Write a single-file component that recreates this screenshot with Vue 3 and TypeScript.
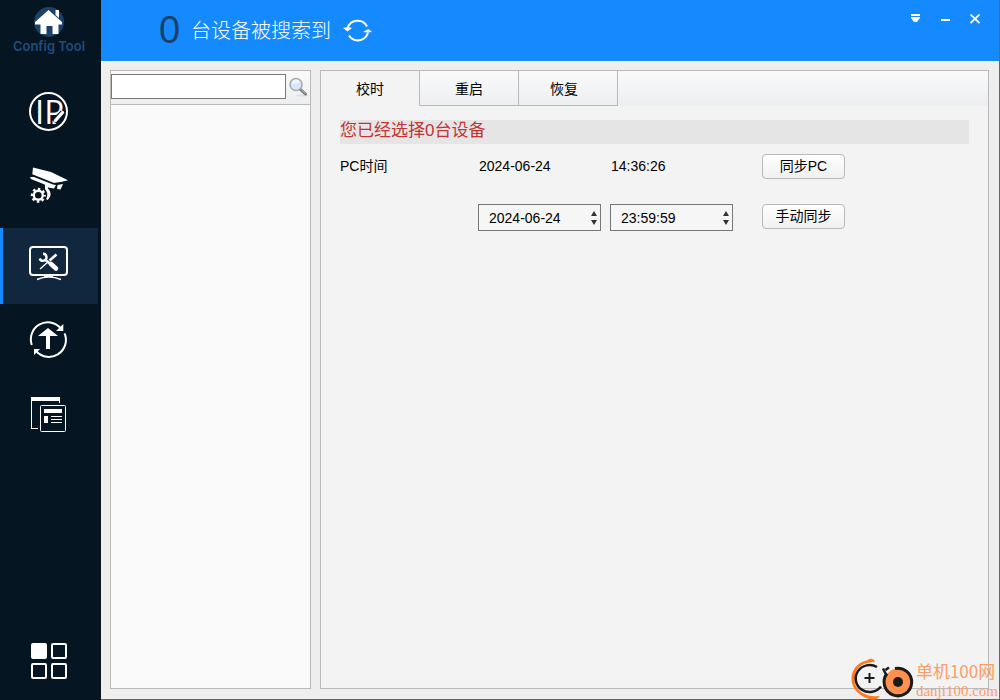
<script setup lang="ts">
import { ref } from 'vue'

const tabs: string[] = ['校时', '重启', '恢复']
const activeTab = ref(0)
const search = ref('')
const deviceCount = ref(0)
const manualDate = ref('2024-06-24')
const manualTime = ref('23:59:59')

function stepDate(days: number) {
  const d = new Date(manualDate.value + 'T00:00:00Z')
  if (isNaN(d.getTime())) return
  d.setUTCDate(d.getUTCDate() + days)
  manualDate.value = d.toISOString().slice(0, 10)
}

function stepTime(seconds: number) {
  const d = new Date('2024-01-01T' + manualTime.value + 'Z')
  if (isNaN(d.getTime())) return
  d.setUTCSeconds(d.getUTCSeconds() + seconds)
  manualTime.value = d.toISOString().slice(11, 19)
}
</script>

<template>
  <div class="window">
    <aside class="sidebar">
      <div class="brand">
        <svg width="30" height="30" viewBox="0 0 30 30" aria-hidden="true">
          <circle cx="15" cy="15" r="15" fill="#1b4168" />
          <path d="M21.500 3h3.500v8l-3.500-3z M14.500 3 28 15v2.500h-3.500V27h-6v-8h-6v8h-6v-9.500H1V15z" fill="#fff" />
        </svg>
        <span class="brand-name">Config Tool</span>
      </div>
      <nav class="nav">
        <button class="nav-item" aria-label="IP">
          <svg class="icon" viewBox="0 0 40 40">
            <circle cx="19.5" cy="20.500" r="18.500" fill="none" stroke="#fff" stroke-width="2" />
            <text class="ip" x="6" y="33">IP</text>
            <path d="M34 21.500 25 31" stroke="#061522" stroke-width="6" />
            <path d="M33.500 21.500 26.500 29.500" stroke="#fff" stroke-width="3.400" stroke-linecap="round" />
            <path d="M23.500 29.500v3.500h4z" fill="#fff" />
          </svg>
        </button>
        <button class="nav-item" aria-label="Camera">
          <svg class="icon" viewBox="0 0 40 40" fill="#fff">
            <path d="M4 .5 22 5 39 13.300 33 14.800 25 16 3.300 7.300z" />
            <path d="M1 10h4l19 7.500 3 .5-2 3.500-5-.8-5-3.500L2 12z" />
            <path d="M28.500 18l5.500-1-2.500 5.500-3.500-.6z" />
            <path d="M16 16h3v5.500c3.500 3 3.500 8.500-.5 11.500l-1.500-1c1.500-2 2-5.500 0-8.500l-1-1.500z" />
            <circle cx="9.300" cy="28.300" r="4.500" fill="none" stroke="#fff" stroke-width="2.400" />
            <circle cx="9.300" cy="28.300" r="6.300" fill="none" stroke="#fff" stroke-width="2.400" stroke-dasharray="2.500 2.448" stroke-dashoffset="1.250" />
          </svg>
        </button>
        <button class="nav-item active" aria-label="Maintenance">
          <svg class="icon" viewBox="0 0 40 40" fill="none" stroke="#fff">
            <rect x="1" y="4" width="37" height="28" rx="3" stroke-width="2" />
            <path d="M8 36.500c4-1.800 7-2.500 11.700-2.500s8 .7 12.300 2.500" stroke-width="1.600" />
            <path d="M15 33h9" stroke-width="2" />
            <path d="M11 26 20 18" stroke-width="1.300" />
            <path d="M20.500 17.500 27.500 11.500" stroke-width="2.600" />
            <path d="M22 21 27 25.500" stroke-width="4.500" stroke-linecap="round" />
            <path d="M17 17.500 22 21.500" stroke-width="2.400" />
            <path d="M14 10.800a3.500 3.500 0 1 1-3.300 4.700" stroke-width="2.400" />
          </svg>
        </button>
        <button class="nav-item" aria-label="Upgrade">
          <svg class="icon" viewBox="0 0 40 40">
            <path d="M2.800 26A17 17 0 0 1 31.500 9M35.600 14.300A17 17 0 0 1 7.500 32.500" fill="none" stroke="#fff" stroke-width="2" />
            <path d="M34.300 5v7H27zM5 30h6l-6 6zM19 9l10 8h-8v13h-4V17H9z" fill="#fff" />
          </svg>
        </button>
        <button class="nav-item" aria-label="Templates">
          <svg class="icon" viewBox="0 0 40 40">
            <path d="M2 2h29v6h-1V6H3v27h6v1H2z" fill="#fff" />
            <rect x="11.500" y="10.500" width="25" height="26" rx="1" fill="none" stroke="#fff" />
            <path d="M15 14h18v4H15zM15 21h4v7h-4zM22 21h11v1H22zM22 24h11v1H22zM22 27h11v1H22z" fill="#fff" />
          </svg>
        </button>
      </nav>
      <button class="grid-button" aria-label="Menu">
        <svg width="36" height="36" viewBox="0 0 36 36" fill="none" stroke="#fff" stroke-width="2">
          <rect x="1" y="1" width="14" height="14" rx="1" fill="#fff" />
          <rect x="21" y="1" width="14" height="14" rx="1" />
          <rect x="1" y="21" width="14" height="14" rx="1" />
          <rect x="21" y="21" width="14" height="14" rx="1" />
        </svg>
      </button>
    </aside>

    <div class="content">
      <header class="header">
        <span class="count">{{ deviceCount }}</span>
        <h1 class="found">台设备被搜索到</h1>
        <button class="refresh" aria-label="刷新">
          <svg width="30" height="24" viewBox="0 0 30 24">
            <path d="M4.500 9.500A10.500 10.500 0 0 1 24 7.500M25 13.500A10.500 10.500 0 0 1 6 16.500" fill="none" stroke="#fff" stroke-width="2" />
            <path d="M0 9 4.500 8 9 9 4.500 12.500zM20 13 25.500 10 29 13 25 13.500z" fill="#fff" />
          </svg>
        </button>
        <div class="window-buttons">
          <button aria-label="菜单">
            <svg width="10" height="10" viewBox="0 0 10 10"><path d="M1 0h9v2H1zM1 3h9v1L7 8H4L1 4z" fill="#fff" /></svg>
          </button>
          <button aria-label="最小化">
            <svg width="10" height="10" viewBox="0 0 10 10"><path d="M1 5h9v2H1z" fill="#fff" /></svg>
          </button>
          <button aria-label="关闭">
            <svg width="10" height="10" viewBox="0 0 10 10"><path d="M.5.5l9 8.500M9.500.5l-9 8.500" stroke="#fff" stroke-width="1.800" /></svg>
          </button>
        </div>
      </header>

      <main class="body">
        <section class="devices">
          <form class="search" @submit.prevent>
            <input v-model="search" type="text" aria-label="搜索" />
            <button type="submit" aria-label="搜索">
              <svg width="20" height="20" viewBox="0 0 20 20">
                <ellipse cx="14" cy="18.500" rx="6" ry="1" fill="#ddd" />
                <path d="M12.500 12.500 17.500 17" stroke="#777" stroke-width="3" stroke-linecap="round" />
                <path d="M13.500 13 17.500 16.500" stroke="#bbb" stroke-width="1" />
                <circle cx="8" cy="7.500" r="6" fill="#d5e7fb" stroke="#aaa" stroke-width="1.500" />
                <path d="M4 7a4 4 0 0 1 8-1z" fill="#edf5fe" />
              </svg>
            </button>
          </form>
        </section>

        <section class="panel">
          <div class="tabs" role="tablist">
            <button
              v-for="(tab, i) in tabs"
              :key="tab"
              class="tab"
              :class="{ selected: i === activeTab }"
              role="tab"
              :aria-selected="i === activeTab"
              @click="activeTab = i"
            >{{ tab }}</button>
          </div>
          <div class="tab-body">
            <p class="notice">您已经选择{{ deviceCount }}台设备</p>
            <div class="row">
              <span class="label">PC时间</span>
              <span class="value">2024-06-24</span>
              <span class="value">14:36:26</span>
              <button class="action">同步PC</button>
            </div>
            <div class="row manual">
              <div class="spin date">
                <input v-model="manualDate" type="text" aria-label="日期" />
                <div class="arrows">
                  <button class="up" aria-label="增加日期" @click="stepDate(1)"></button>
                  <button class="down" aria-label="减少日期" @click="stepDate(-1)"></button>
                </div>
              </div>
              <div class="spin time">
                <input v-model="manualTime" type="text" aria-label="时间" />
                <div class="arrows">
                  <button class="up" aria-label="增加时间" @click="stepTime(1)"></button>
                  <button class="down" aria-label="减少时间" @click="stepTime(-1)"></button>
                </div>
              </div>
              <button class="action">手动同步</button>
            </div>
          </div>
        </section>
      </main>
    </div>

    <div class="watermark">
      <svg width="66" height="42" viewBox="0 0 66 42" fill="none">
        <path d="M23 3.500C19 -.5 1.500 5 1.500 21 1.500 33 14 41 23 41.500c3 0 6-1.500 6.500-3.500C18 39.500 4.500 34 4.500 21 4.500 10 13 4.500 21 4.500z" fill="#ff7a1a" />
        <path d="M17 2.500C20-.5 25 .5 24.500 4.500z" fill="#ff7a1a" />
        <path d="M27 9A14 13.500 0 1 0 31 28.500M33 10.500l3 6M35.500 12l3.500-2.500" stroke="#1d1a1b" stroke-width="2.500" />
        <path d="M19.500 15v10M14.500 20h10" stroke="#1d1a1b" stroke-width="2" />
        <circle cx="48" cy="24" r="13.500" fill="#ff914d" />
        <path d="M45 10.500A13.800 13.800 0 1 1 37 15.500" stroke="#1d1a1b" stroke-width="3" />
        <circle cx="48" cy="24" r="5" fill="#1d1a1b" />
      </svg>
      <div class="mark-text">
        <span class="mark-name">单机100网</span>
        <span class="mark-site">danji100.com</span>
      </div>
    </div>
  </div>
</template>

<style>
body {
  margin: 0;
}
</style>

<style scoped>
* {
  box-sizing: border-box;
}
.window {
  position: relative;
  display: flex;
  height: 100vh;
  overflow: hidden;
  font-family: "Liberation Sans", "Noto Sans CJK SC", sans-serif;
  font-size: 14px;
  color: #000;
  background: #eee;
}
button {
  margin: 0;
  padding: 0;
  border: 0;
  background: none;
  font: inherit;
  color: inherit;
}
svg {
  display: block;
}
.sidebar {
  display: flex;
  flex: none;
  flex-direction: column;
  width: 101px;
  background: #061522;
}
.brand {
  display: flex;
  flex-direction: column;
  align-items: center;
  height: 76px;
  padding: 7px 3px 0 0;
}
.brand-name {
  font-family: Inter, sans-serif;
  font-size: 13px;
  font-weight: 600;
  line-height: 18px;
  color: #1f4d7e;
}
.nav-item {
  display: flex;
  align-items: center;
  justify-content: center;
  width: 98px;
  height: 76px;
  padding-bottom: 6px;
}
.nav-item.active {
  background: #11273d;
  box-shadow: inset 3px 0 #148afe;
}
.icon {
  width: 40px;
  height: 40px;
  overflow: visible;
}
.ip {
  font-family: "Open Sans", sans-serif;
  font-size: 33px;
  fill: #fff;
}
.grid-button {
  display: flex;
  justify-content: center;
  width: 98px;
  margin-top: auto;
  padding-bottom: 21px;
}
.content {
  display: flex;
  flex: 1;
  flex-direction: column;
  min-width: 0;
  border-right: 1px solid #666;
  border-bottom: 1px solid #666;
}
.header {
  display: flex;
  flex: none;
  align-items: center;
  height: 61px;
  padding-left: 58px;
  background: #148afe;
}
.count {
  width: 32px;
  font-size: 38px;
  line-height: 61px;
  color: #1b4168;
}
.found {
  margin: 0;
  padding-bottom: 2px;
  font-size: 20px;
  font-weight: 300;
  color: #fff;
}
.refresh {
  margin-left: 12px;
}
.window-buttons {
  display: flex;
  gap: 20px;
  align-self: flex-start;
  margin-left: auto;
  padding: 14px 19px 0 0;
}
.body {
  display: flex;
  flex: 1;
  gap: 9px;
  min-height: 0;
  padding: 9px 10px 10px 9px;
}
.devices {
  flex: none;
  width: 201px;
  border: 1px solid #b9b9b9;
  background: #fafafa;
}
.search {
  display: flex;
  align-items: center;
  gap: 2px;
  height: 34px;
  padding-bottom: 2px;
  border-bottom: 1px solid #b9b9b9;
  background: linear-gradient(#fafafa, #eceef1);
}
.search input {
  width: 175px;
  height: 25px;
  padding: 0 4px;
  border: 1px solid #777;
  background: #fff;
  font: inherit;
}
.panel {
  flex: 1;
  min-width: 0;
  border: 1px solid #b9b9b9;
  background: #f3f3f3;
}
.tabs {
  display: flex;
  height: 35px;
  background: linear-gradient(#fafafa, #eceef1);
}
.tab {
  width: 99px;
  border: solid #b9b9b9;
  border-width: 0 1px 1px 0;
}
.tab:last-child {
  padding-right: 8px;
}
.tab.selected {
  border-bottom-color: #f3f3f3;
  background: #f3f3f3;
}
.tab-body {
  padding: 14px 19px;
}
.notice {
  margin: 0;
  padding-bottom: 2px;
  background: #e5e5e5;
  font-size: 17px;
  line-height: 22px;
  color: #c23434;
}
.row {
  display: grid;
  grid-template-columns: 138px 132px 152px 83px;
  align-items: start;
  margin-top: 10px;
  line-height: 24px;
}
.manual {
  margin-top: 25px;
}
.value {
  padding-left: 1px;
}
.spin {
  display: flex;
  width: 123px;
  height: 27px;
  border: 1px solid #777;
  background: #f6f6f6;
}
.date {
  grid-column: 2;
}
.spin input {
  flex: 1;
  min-width: 0;
  padding: 0 0 0 10px;
  border: 0;
  background: none;
  font: inherit;
}
.arrows {
  display: flex;
  flex-direction: column;
  justify-content: center;
  gap: 4px;
  padding-right: 3px;
}
.up,
.down {
  width: 0;
  height: 0;
  border: solid transparent;
}
.up {
  border-width: 0 3px 5px;
  border-bottom-color: #333;
}
.down {
  border-width: 5px 3px 0;
  border-top-color: #333;
}
.action {
  height: 25px;
  border: 1px solid #b9b9b9;
  border-radius: 4px;
  background: linear-gradient(#fff, #f0f0f0);
  line-height: 23px;
}
.watermark {
  position: absolute;
  right: 2px;
  bottom: 0;
  display: flex;
}
.mark-text {
  display: flex;
  flex-direction: column;
  justify-content: flex-end;
  color: #ff9c63;
}
.mark-name {
  font-family: "Noto Sans CJK SC", sans-serif;
  font-size: 17px;
  line-height: 22px;
}
.mark-site {
  font-family: "Liberation Serif", serif;
  font-size: 15px;
  line-height: 18px;
}
</style>
